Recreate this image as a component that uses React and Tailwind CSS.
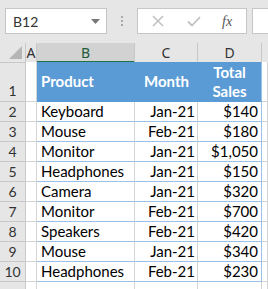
const filas = [
  { producto: 'Keyboard', mes: 'Jan-21', total: '$140' },
  { producto: 'Mouse', mes: 'Feb-21', total: '$180' },
  { producto: 'Monitor', mes: 'Jan-21', total: '$1,050' },
  { producto: 'Headphones', mes: 'Jan-21', total: '$150' },
  { producto: 'Camera', mes: 'Jan-21', total: '$320' },
  { producto: 'Monitor', mes: 'Feb-21', total: '$700' },
  { producto: 'Speakers', mes: 'Feb-21', total: '$420' },
  { producto: 'Mouse', mes: 'Jan-21', total: '$340' },
  { producto: 'Headphones', mes: 'Feb-21', total: '$230' },
];

const columnas = 'grid grid-cols-[26px_11px_98px_63px_64px_1fr]';
const cabeceraFila = 'flex items-end justify-center bg-[#e6e6e6] border-r border-b border-[#c8c8c8] text-[14px] text-[#333] leading-[19px]';
const celda = 'border-r border-b border-[#d4d4d4] bg-white';

function BarraFormula() {
  return (
    <div className="h-[43px] bg-[#e6e6e6] flex items-start pt-[8px] pl-[5px]">
      <div className="w-[102px] h-[26px] bg-white border border-[#c6c6c6] flex items-center justify-between pl-[7px] pr-[6px]">
        <span className="text-[14px] text-[#333]">B12</span>
        <svg width="9" height="5" viewBox="0 0 9 5"><path d="M0 0h9L4.5 5z" fill="#777" /></svg>
      </div>
      <div className="w-[30px] h-[26px] flex flex-col items-center justify-center gap-[2px]">
        <span className="w-[2px] h-[2px] bg-[#aaa]" />
        <span className="w-[2px] h-[2px] bg-[#aaa]" />
        <span className="w-[2px] h-[2px] bg-[#aaa]" />
      </div>
      <div className="w-[110px] h-[26px] bg-white border border-[#c6c6c6] flex items-center">
        <svg className="ml-[14px]" width="12" height="12" viewBox="0 0 12 12">
          <path d="M1 1l10 10M11 1L1 11" stroke="#c2c2c2" strokeWidth="1.6" />
        </svg>
        <svg className="ml-[23px]" width="14" height="11" viewBox="0 0 14 11">
          <path d="M1 5.5l4 4L13 1" stroke="#c2c2c2" strokeWidth="1.8" fill="none" />
        </svg>
        <span className="ml-[21px] text-[14px] italic text-[#555] font-['Liberation_Serif',serif]">fx</span>
      </div>
      <div className="ml-[5px] flex-1 h-[26px] bg-white border border-[#c6c6c6] border-r-0" />
    </div>
  );
}

function App() {
  return (
    <div className="w-[268px] h-[289px] overflow-hidden bg-white font-['Lato',sans-serif] text-[15px] text-black">
      <BarraFormula />

      <div className={`${columnas} h-[19px] font-['Noto_Sans',sans-serif]`}>
        <div className="relative bg-[#e6e6e6] border-r border-b border-[#c8c8c8]">
          <svg className="absolute right-[3px] bottom-[3px]" width="13" height="13" viewBox="0 0 13 13">
            <path d="M13 0v13H0z" fill="#b5b5b5" />
          </svg>
        </div>
        <div className={cabeceraFila}>A</div>
        <div className="flex items-end justify-center bg-[#d2d2d2] border-r border-[#c8c8c8] border-b-2 border-b-[#217346] text-[14px] text-[#1e5c3a] leading-[17px]">B</div>
        <div className={cabeceraFila}>C</div>
        <div className={cabeceraFila}>D</div>
        <div className="bg-[#e6e6e6] border-b border-[#c8c8c8]" />
      </div>

      <div className={`${columnas} h-[40px]`}>
        <div className={`${cabeceraFila} pb-[1px]`}>1</div>
        <div className={celda} />
        <div className="bg-[#5b9bd5] flex items-center pl-[4px] font-bold text-white border-b border-[#5b9bd5]">Product</div>
        <div className="bg-[#5b9bd5] flex items-center justify-center font-bold text-white border-b border-[#5b9bd5]">Month</div>
        <div className="bg-[#5b9bd5] flex items-center justify-center text-center font-bold text-white leading-[19px] border-r border-b border-r-[#9bc2e6] border-b-[#5b9bd5]">
          Total<br />Sales
        </div>
        <div className={celda} />
      </div>

      {filas.map((fila, i) => (
        <div key={i} className={`${columnas} h-[20px] leading-[19px]`}>
          <div className={cabeceraFila}>{i + 2}</div>
          <div className={celda} />
          <div className="border-r border-b border-r-[#d4d4d4] border-b-[#9bc2e6] pl-[4px]">{fila.producto}</div>
          <div className="border-r border-b border-r-[#d4d4d4] border-b-[#9bc2e6] text-right pr-[2px]">{fila.mes}</div>
          <div className="border-r border-b border-[#9bc2e6] text-right pr-[3px]">{fila.total}</div>
          <div className={celda} />
        </div>
      ))}

      {/* fila 11: solo asoma el borde superior */}
      <div className={`${columnas} h-[20px]`}>
        <div className="bg-[#e6e6e6] border-r border-b border-[#c8c8c8]" />
        <div className={celda} />
        <div className={celda} />
        <div className={celda} />
        <div className={celda} />
        <div className={celda} />
      </div>
    </div>
  );
}

export default App;
